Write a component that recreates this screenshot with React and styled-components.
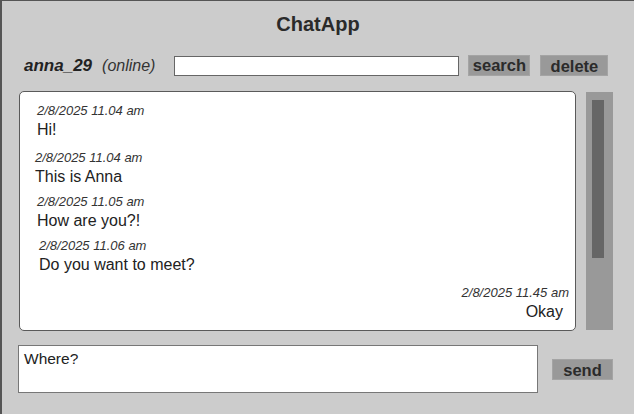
import styled, { createGlobalStyle } from 'styled-components';

const GlobalStyle = createGlobalStyle`
  html, body {
    margin: 0;
    padding: 0;
    background: #cccccc;
  }
  * {
    box-sizing: border-box;
  }
`;

const Frame = styled.div`
  width: 634px;
  height: 414px;
  background: #cccccc;
  border-left: 2px solid #555;
  border-top: 1px solid #555;
  font-family: "Liberation Sans", Arial, sans-serif;
  color: #222;
  display: flex;
  flex-direction: column;
`;

const Title = styled.h1`
  margin: 0;
  padding-top: 11px;
  height: 30px;
  text-align: center;
  font-size: 20px;
  line-height: 24px;
  font-weight: bold;
  color: #2a2a2a;
`;

const Toolbar = styled.div`
  display: flex;
  align-items: center;
  height: 48px;
  padding-left: 22px;
  padding-top: 21px;
`;

const UserName = styled.span`
  font-size: 17px;
  font-weight: bold;
  font-style: italic;
  color: #222;
`;

const Status = styled.span`
  font-size: 16px;
  font-style: italic;
  color: #333;
  margin-left: 10px;
`;

const SearchInput = styled.div`
  width: 285px;
  height: 20px;
  margin-left: 19px;
  background: #fff;
  border: 1px solid #666;
`;

const ToolButton = styled.div`
  height: 21px;
  width: ${p => p.$width}px;
  margin-left: ${p => p.$gap}px;
  margin-top: ${p => p.$offset || 0}px;
  background: #999999;
  border: 1px solid #a4a4a4;
  display: flex;
  align-items: center;
  justify-content: center;
  padding-top: ${p => p.$textDrop || 0}px;
  font-size: 16.5px;
  font-weight: bold;
  color: #2b2b2b;
`;

const Main = styled.div`
  display: flex;
  align-items: flex-start;
  padding-left: 17px;
  margin-top: 12px;
`;

const ChatPanel = styled.div`
  width: 557px;
  height: 240px;
  background: #fff;
  border: 1px solid #5a5a5a;
  border-radius: 5px;
  padding-top: 11px;
  display: flex;
  flex-direction: column;
`;

const Message = styled.div`
  display: flex;
  flex-direction: column;
  align-items: ${p => (p.$mine ? 'flex-end' : 'flex-start')};
  padding-left: ${p => p.$indent || 0}px;
  padding-right: ${p => (p.$mine ? 6 : 0)}px;
  margin-top: ${p => p.$space || 0}px;
`;

const Stamp = styled.span`
  font-size: 13px;
  font-style: italic;
  line-height: 16px;
  color: #333;
`;

const Text = styled.span`
  font-size: 16px;
  line-height: 20px;
  color: #222;
  margin-top: 1px;
  margin-right: ${p => (p.$mine ? 6 : 0)}px;
`;

const ScrollTrack = styled.div`
  width: 27px;
  height: 238px;
  margin-left: 10px;
  margin-top: 1px;
  background: #999999;
  padding: 8px 0 0 6px;
`;

const ScrollThumb = styled.div`
  width: 12px;
  height: 158px;
  background: #666666;
`;

const Composer = styled.div`
  display: flex;
  align-items: center;
  padding-left: 16px;
  margin-top: 14px;
`;

const MessageBox = styled.div`
  width: 520px;
  height: 48px;
  background: #fff;
  border: 1px solid #777;
  padding: 3px 0 0 5px;
  font-size: 15.5px;
  line-height: 20px;
  color: #222;
`;

const messages = [
  { time: '2/8/2025 11.04 am', text: 'Hi!', indent: 17, space: 0 },
  { time: '2/8/2025 11.04 am', text: 'This is Anna', indent: 15, space: 10 },
  { time: '2/8/2025 11.05 am', text: 'How are you?!', indent: 17, space: 7 },
  { time: '2/8/2025 11.06 am', text: 'Do you want to meet?', indent: 19, space: 7 },
  { time: '2/8/2025 11.45 am', text: 'Okay', mine: true, space: 10 },
];

export default function App() {
  return (
    <>
      <GlobalStyle />
      <Frame>
        <Title>ChatApp</Title>
        <Toolbar>
          <UserName>anna_29</UserName>
          <Status>(online)</Status>
          <SearchInput />
          <ToolButton $width={62} $gap={9}>search</ToolButton>
          <ToolButton $width={68} $gap={10} $offset={-1} $textDrop={3}>delete</ToolButton>
        </Toolbar>
        <Main>
          <ChatPanel>
            {messages.map((m, i) => (
              <Message key={i} $mine={m.mine} $indent={m.indent} $space={m.space}>
                <Stamp>{m.time}</Stamp>
                <Text $mine={m.mine}>{m.text}</Text>
              </Message>
            ))}
          </ChatPanel>
          <ScrollTrack>
            <ScrollThumb />
          </ScrollTrack>
        </Main>
        <Composer>
          <MessageBox>Where?</MessageBox>
          <ToolButton $width={61} $gap={14} $textDrop={2}>send</ToolButton>
        </Composer>
      </Frame>
    </>
  );
}
